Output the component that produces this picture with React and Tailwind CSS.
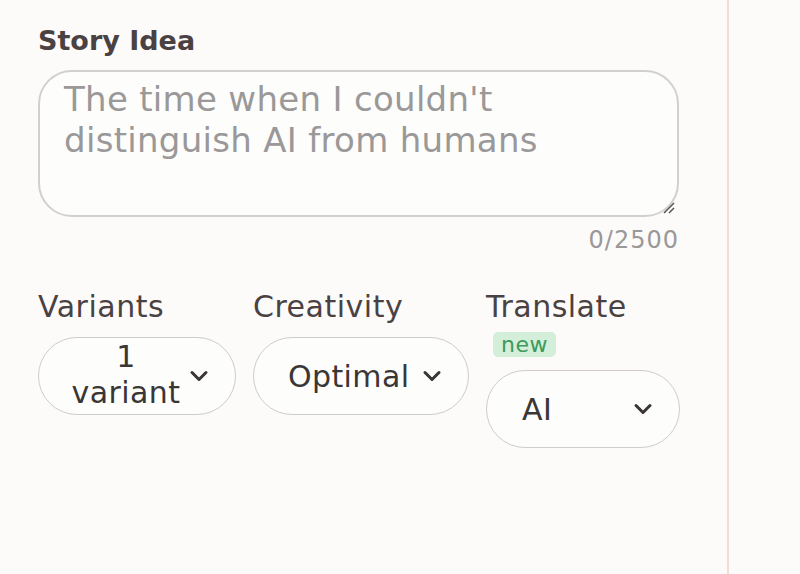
import { ChevronDown } from 'lucide-react';

const font = { fontFamily: '"DejaVu Sans", "Noto Sans", sans-serif' };

function Select({ children, className }) {
  return (
    <div
      className={`flex h-[78px] items-center rounded-full border border-[#cfcccb] bg-[#fdfdfc] pr-[22px] text-[30px] tracking-[0.4px] text-[#3b3636] ${className}`}
    >
      {children}
      <ChevronDown size={28} strokeWidth={2.6} className="ml-auto shrink-0" />
    </div>
  );
}

export default function App() {
  return (
    <div className="flex h-[574px] w-[800px] bg-[#fcfbfa]" style={font}>
      <div className="w-[729px] border-r-2 border-[#f6dcd3] pl-[38px] pr-[48px] pt-[22px]">
        {/* Story idea */}
        <label className="block text-[27px] font-bold leading-[38px] text-[#4a4242]">Story Idea</label>
        <div className="relative mt-[10px]">
          <textarea
            placeholder={"The time when I couldn't distinguish AI from humans"}
            className="block h-[147px] w-full resize-none rounded-[34px] border-2 border-[#d2d0cf] bg-[#fdfdfc] pl-[24px] pr-[60px] pt-[7px] text-[34px] leading-[41px] tracking-[0.3px] text-[#3b3636] outline-none placeholder:text-[#9a9898]"
          />
          <svg className="absolute bottom-[3px] right-[4px]" width="14" height="14" viewBox="0 0 14 14">
            <path d="M13 3 L3 13 M13 8 L8 13" stroke="#555" strokeWidth="1.5" />
          </svg>
        </div>
        <div className="mt-[9px] text-right text-[24px] leading-[28px] tracking-[1px] text-[#9a9898]">0/2500</div>

        {/* Options */}
        <div className="mt-[33px] flex gap-[17px]">
          <div className="flex flex-col">
            <span className="text-[30px] leading-[40px] tracking-[0.5px] text-[#4a4242]">Variants</span>
            <Select className="mt-[10px] w-[198px] pl-[28px]">
              <span className="-mt-[2px] flex-1 text-center leading-[36px]">
                1<br />variant
              </span>
            </Select>
          </div>
          <div className="flex flex-col">
            <span className="text-[30px] leading-[40px] tracking-[0.5px] text-[#4a4242]">Creativity</span>
            <Select className="mt-[10px] w-[216px] pl-[34px]">
              <span>Optimal</span>
            </Select>
          </div>
          <div className="flex flex-col">
            <span className="text-[30px] leading-[40px] tracking-[0.5px] text-[#4a4242]">Translate</span>
            <span className="mt-[5px] ml-[7px] self-start rounded-[5px] bg-[#d3efd9] px-[8px] text-[22px] leading-[25px] tracking-[0.5px] text-[#3d9a5c]">
              new
            </span>
            <Select className="mt-[13px] w-[194px] pl-[35px]">
              <span>AI</span>
            </Select>
          </div>
        </div>
      </div>
      <div className="flex-1" />
    </div>
  );
}
